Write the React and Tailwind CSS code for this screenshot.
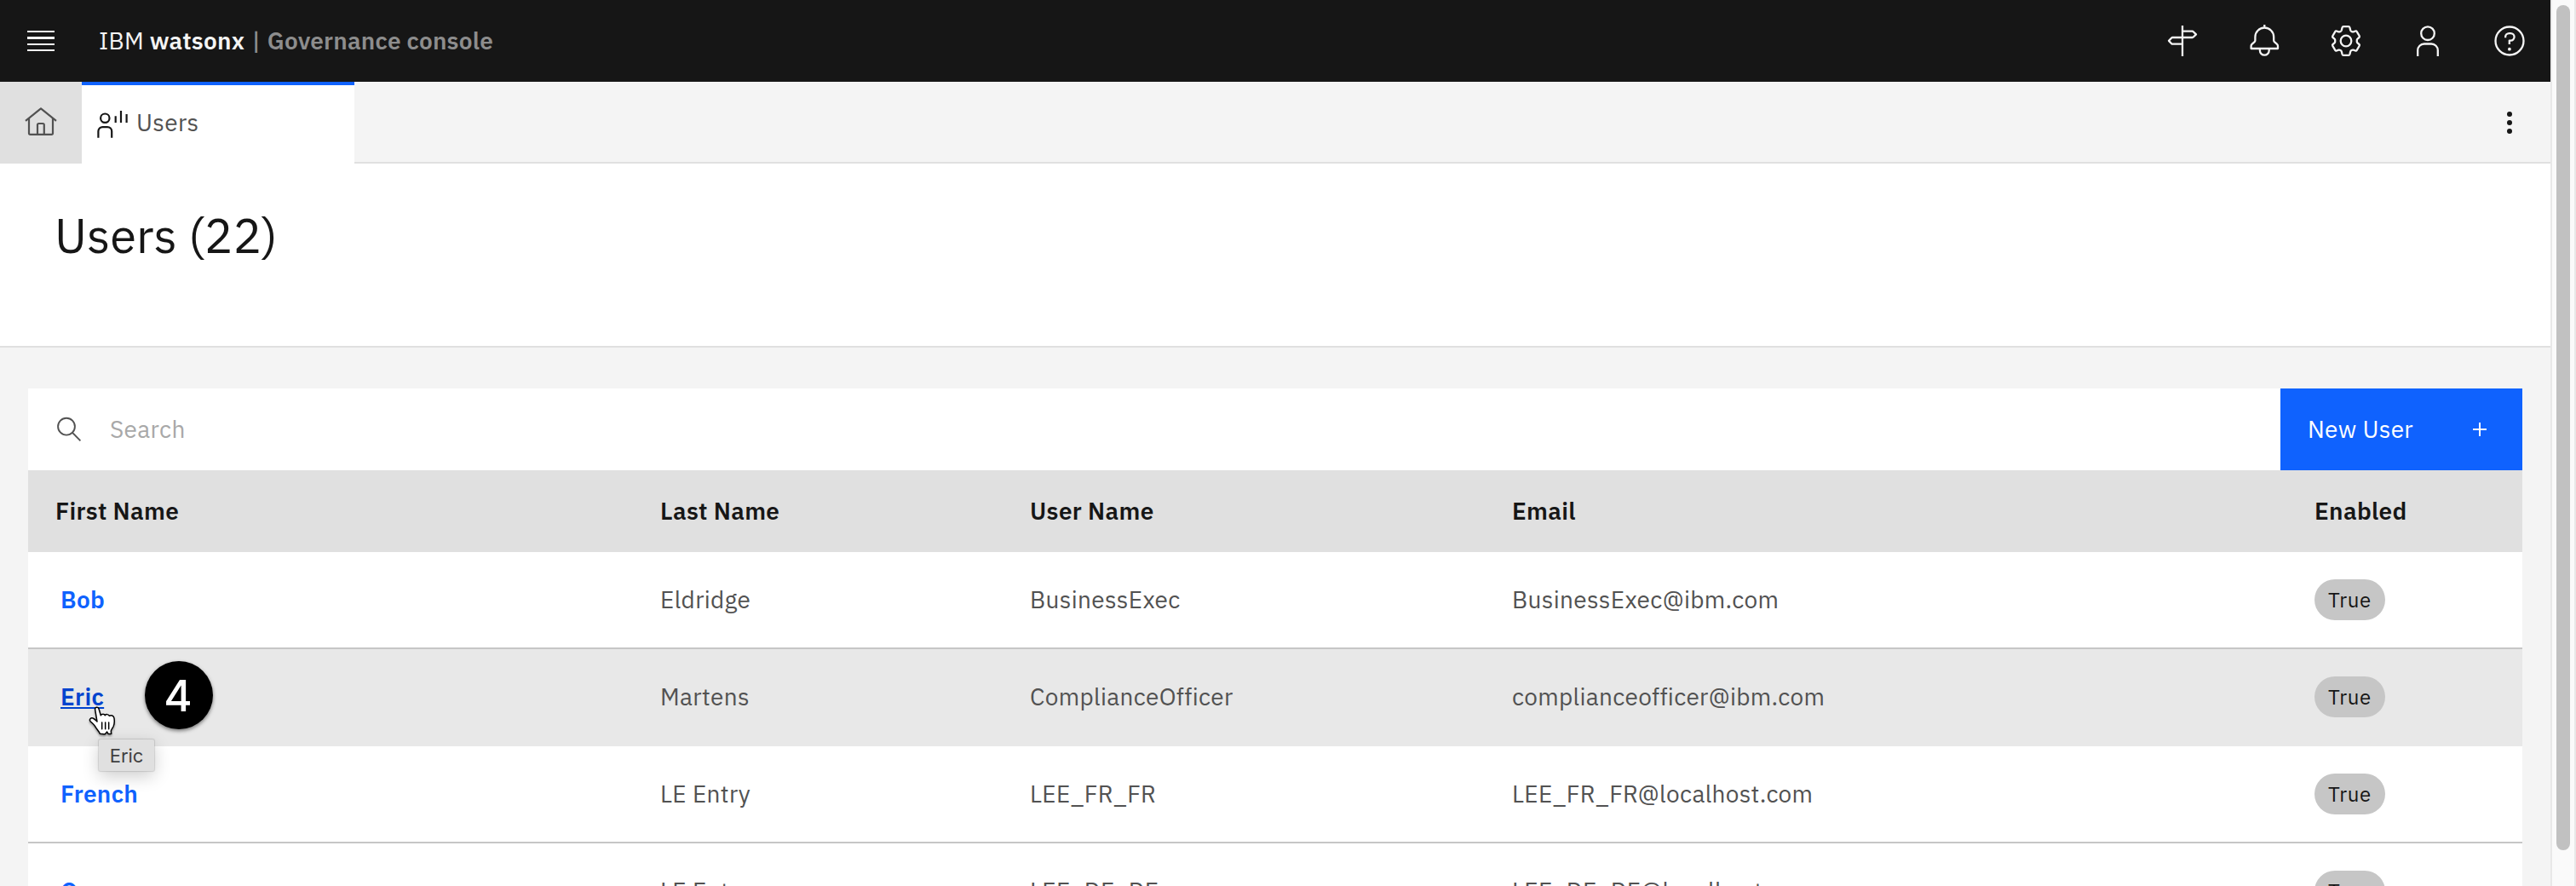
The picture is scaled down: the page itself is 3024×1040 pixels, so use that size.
const columns = "grid grid-cols-[710px_434px_566px_942px_1fr] items-center pl-8";

const users = [
  { first: "Bob", last: "Eldridge", user: "BusinessExec", email: "BusinessExec@ibm.com" },
  { first: "Eric", last: "Martens", user: "ComplianceOfficer", email: "complianceofficer@ibm.com", hovered: true },
  { first: "French", last: "LE Entry", user: "LEE_FR_FR", email: "LEE_FR_FR@localhost.com" },
  { first: "German", last: "LE Entry", user: "LEE_DE_DE", email: "LEE_DE_DE@localhost.com" },
];

function Icon({ children, className = "size-10", width = 2.3 }) {
  return (
    <svg
      viewBox="0 0 40 40"
      className={className}
      fill="none"
      stroke="currentColor"
      strokeWidth={width}
      strokeLinejoin="round"
    >
      {children}
    </svg>
  );
}

function SignpostIcon() {
  return (
    <Icon>
      <path d="M20 2v36M20 8.7h11.6c.5 0 .9.2 1.2.5l3.2 3.2-3.2 3.1c-.3.3-.7.5-1.2.5H8.4c-.5 0-.9.2-1.2.5L4 19.9l3.2 3.3c.3.3.7.5 1.2.5H20" />
    </Icon>
  );
}

function BellIcon() {
  return (
    <Icon>
      <path d="M20.3 1v3.5M9.4 15.4a10.9 10.9 0 0 1 21.8 0v3.9c0 .9.4 1.6 1 2.1l2.6 2.3c.8.7 1.2 1.4 1.2 2.4V29H4.6v-2.9c0-1 .4-1.7 1.2-2.4l2.6-2.3c.6-.5 1-1.2 1-2.1z" />
      <path d="M14.9 29v2.3a5.4 5.4 0 0 0 10.8 0V29" />
    </Icon>
  );
}

function GearIcon() {
  return (
    <Icon>
      <path d="M17 3.2h6c.8 0 1.2.4 1.4 1.1l.8 3.2c.2.6.5 1 1 1.2l.9.5c.5.3 1 .3 1.6.1l2.2-.8c.8-.3 1.4-.1 1.8.6l3 5.1c.4.7.3 1.3-.3 1.8l-1.9 1.6c-.5.4-.7.9-.7 1.5v1.8c0 .6.2 1.1.7 1.5l1.9 1.6c.6.5.7 1.1.3 1.8l-3 5.1c-.4.7-1 .9-1.8.6l-2.2-.8c-.6-.2-1.1-.2-1.6.1l-.9.5c-.5.3-.8.6-1 1.2l-.8 3.2c-.2.7-.6 1.1-1.4 1.1h-6c-.8 0-1.2-.4-1.4-1.1l-.8-3.2c-.2-.6-.5-.9-1-1.2l-.9-.5c-.5-.3-1-.3-1.6-.1l-2.2.8c-.8.3-1.4.1-1.8-.6l-3-5.1c-.4-.7-.3-1.3.3-1.8l1.9-1.6c.5-.4.7-.9.7-1.5v-1.8c0-.6-.2-1.1-.7-1.5l-1.9-1.6c-.6-.5-.7-1.1-.3-1.8l3-5.1c.4-.7 1-.9 1.8-.6l2.2.8c.6.2 1.1.2 1.6-.1l.9-.5c.5-.2.8-.6 1-1.2l.8-3.2c.2-.7.6-1.1 1.4-1.1z" />
      <circle cx="20" cy="20" r="6.3" />
    </Icon>
  );
}

function PersonIcon() {
  return (
    <Icon>
      <circle cx="20" cy="11.2" r="7.8" />
      <path d="M8.2 38v-7a7.5 7.5 0 0 1 7.5-7.5h8.6a7.5 7.5 0 0 1 7.5 7.5v7" />
    </Icon>
  );
}

function HelpIcon() {
  return (
    <Icon>
      <circle cx="20" cy="20" r="16.5" />
      <path d="M15.1 16.3v-.8a4.4 4.4 0 0 1 4.4-4.4h1.8a4.2 4.2 0 0 1 0 8.5h-1.5V24" />
      <circle cx="19.9" cy="29.7" r="1.9" fill="currentColor" stroke="none" />
    </Icon>
  );
}

function HomeIcon() {
  return (
    <Icon width={2.2}>
      <path d="M2 17.8 20 3.4l18 14.4" />
      <path d="M6 14.8v17.4c0 .9.7 1.6 1.6 1.6h24.8c.9 0 1.6-.7 1.6-1.6V14.8" />
      <path d="M16 33.8V22.6c0-.9.7-1.6 1.6-1.6h4.6c.9 0 1.6.7 1.6 1.6v11.2" />
    </Icon>
  );
}

function UserAnalyticsIcon() {
  return (
    <Icon width={2.2}>
      <circle cx="11.3" cy="14.7" r="5.2" />
      <path d="M3.4 37.7v-7.6a5 5 0 0 1 5-5h5.8a5 5 0 0 1 5 5v7.6" />
      <path d="M23.7 12.3V20M30 6v14M36.6 10v10" />
    </Icon>
  );
}

function HandCursor() {
  return (
    <svg
      viewBox="40 203 102 111"
      className="absolute left-[70px] top-[66px] z-20 h-[37px] w-[34px] drop-shadow-[0_2px_1px_rgba(0,0,0,0.35)]"
      fill="#fff"
      stroke="#000"
      strokeWidth="4.5"
      strokeLinejoin="round"
      strokeLinecap="round"
    >
      <path d="M66 218c-2-9 10-12 13-3l7 23c3-6 13-6 15 0 3-5 13-4 15 2 6-4 16-1 17 8 2 14 1 22-3 30-4 7-8 11-8 16l1 9c-5 1-8 1-11 0l-4-7-7 8c-6 1-12 0-18-1-3-9-12-16-17-26-4-7-10-11-17-18-5-7 2-13 9-11 7 3 11 8 15 12z" />
      <path d="M90 263v23M102 263v23M114 263v23" />
    </svg>
  );
}

function TopBar() {
  return (
    <header className="flex h-24 shrink-0 items-center bg-[#161616] text-[#f4f4f4]">
      <button className="flex size-24 items-center justify-center">
        <span className="flex w-8 flex-col gap-[5px]">
          <span className="h-[2.4px] bg-current" />
          <span className="h-[2.4px] bg-current" />
          <span className="h-[2.4px] bg-current" />
          <span className="h-[2.4px] bg-current" />
        </span>
      </button>
      <div className="flex whitespace-pre pl-5 tracking-[0.2px]">
        <span>IBM </span>
        <span className="font-semibold">watsonx</span>
        <span className="pl-0.5 pr-px font-medium text-[#8d8d8d]"> | </span>
        <span className="font-semibold text-[#8d8d8d]">Governance console</span>
      </div>
      <nav className="ml-auto flex">
        {[SignpostIcon, BellIcon, GearIcon, PersonIcon, HelpIcon].map((Glyph, i) => (
          <button key={i} className="flex size-24 items-center justify-center">
            <Glyph />
          </button>
        ))}
      </nav>
    </header>
  );
}

function TabBar() {
  return (
    <div className="flex h-24 shrink-0 bg-[#f4f4f4]">
      <button className="flex w-24 items-center justify-center bg-[#e0e0e0] text-[#525252]">
        <HomeIcon />
      </button>
      <div className="flex w-80 items-center gap-2 border-y-4 border-t-[#0f62fe] border-b-white bg-white pl-4 text-[#161616]">
        <UserAnalyticsIcon />
        <span className="text-[#525252]">Users</span>
      </div>
      <div className="flex flex-1 items-center justify-end border-b-2 border-[#e0e0e0]">
        <button className="flex w-24 flex-col items-center gap-[4.4px] pt-0.5">
          <span className="size-[5.6px] rounded-full bg-[#161616]" />
          <span className="size-[5.6px] rounded-full bg-[#161616]" />
          <span className="size-[5.6px] rounded-full bg-[#161616]" />
        </button>
      </div>
    </div>
  );
}

function UserRow({ first, last, user, email, hovered }) {
  return (
    <div
      className={
        hovered
          ? `${columns} relative z-10 h-[114px] shrink-0 border-b-2 border-[#e8e8e8] bg-[#e8e8e8]`
          : `${columns} h-[114px] shrink-0 border-b-2 border-[#c6c6c6] bg-white`
      }
    >
      <span className="pl-1.5 font-semibold">
        <a
          className={
            hovered
              ? "text-[#0043ce] underline decoration-2 underline-offset-2"
              : "text-[#0f62fe]"
          }
        >
          {first}
        </a>
      </span>
      <span>{last}</span>
      <span>{user}</span>
      <span>{email}</span>
      <span className="flex">
        <span className="flex h-12 w-[83px] items-center justify-center rounded-full bg-[#c6c6c6] text-2xl tracking-[0.64px] text-[#161616]">
          True
        </span>
      </span>
      {hovered && (
        <>
          <HandCursor />
          <span className="absolute left-[137px] top-[14px] flex size-20 items-center justify-center rounded-full bg-black pr-0.5 font-['Inter',sans-serif] text-[51px] leading-none font-medium tracking-normal text-white shadow-[0_2px_4px_rgba(0,0,0,0.5)]">
            4
          </span>
          <span className="absolute left-[83px] top-[106px] flex h-[37px] w-[65px] items-center justify-center rounded-[2px] bg-[#e0e0e0] font-['Inter',sans-serif] text-[22px] leading-none tracking-[-0.1px] text-[#404040] shadow-[0_0_1px_1px_rgba(0,0,0,0.12),0_6px_20px_rgba(0,0,0,0.2)]">
            Eric
          </span>
        </>
      )}
    </div>
  );
}

function UserTable() {
  return (
    <section className="mx-[33px] mt-12 flex flex-col">
      <div className="flex h-24 shrink-0 bg-white">
        <label className="flex flex-1 items-center gap-8 pl-8 text-[#a8a8a8]">
          <svg viewBox="0 0 32 32" className="size-8 text-[#525252]" fill="none" stroke="currentColor" strokeWidth="1.9">
            <circle cx="13" cy="12.7" r="9.9" />
            <path d="m20 19.8 9.4 9.5" />
          </svg>
          Search
        </label>
        <button className="flex w-[284px] items-center justify-between bg-[#0f62fe] pl-8 pr-[42px] text-white">
          New User
          <svg viewBox="0 0 16 16" className="size-4" stroke="currentColor" strokeWidth="2">
            <path d="M8 0v16M0 8h16" />
          </svg>
        </button>
      </div>
      <div className={`${columns} h-24 shrink-0 bg-[#e0e0e0] font-semibold text-[#161616]`}>
        <span>First Name</span>
        <span>Last Name</span>
        <span>User Name</span>
        <span>Email</span>
        <span>Enabled</span>
      </div>
      {users.map((u) => (
        <UserRow key={u.first} {...u} />
      ))}
    </section>
  );
}

export default function App() {
  return (
    <div className="flex h-[1040px] w-[3024px] overflow-hidden bg-[#f4f4f4] font-['IBM_Plex_Sans','Roboto',sans-serif] text-[28px] leading-9 tracking-[0.32px] text-[#525252]">
      <main className="flex h-full w-[2994px] flex-col">
        <TopBar />
        <TabBar />
        <section className="h-[216px] shrink-0 border-b-2 border-[#e0e0e0] bg-white pl-16 pt-[50px]">
          <h1 className="text-[56px] leading-[68px] tracking-normal text-[#161616]">Users (22)</h1>
        </section>
        <UserTable />
      </main>
      <div className="flex w-[30px] justify-center border-x-2 border-[#e8e8e8] bg-[#fafafa] pt-1.5">
        <div className="h-[992px] w-4 rounded-full bg-[#c1c1c1]" />
      </div>
    </div>
  );
}
